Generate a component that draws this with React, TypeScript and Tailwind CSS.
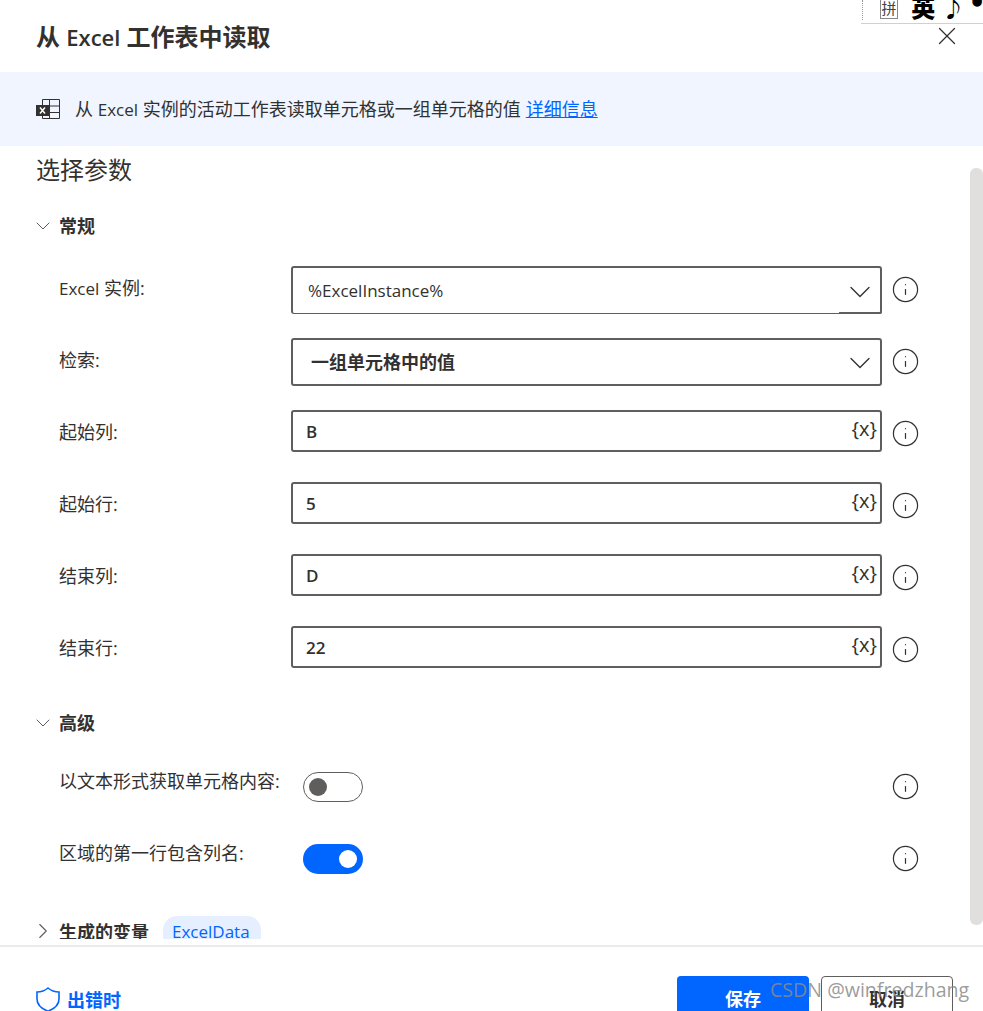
import { ChevronDown, ChevronRight, X, Info } from "lucide-react";

const font = "font-['Open_Sans','Noto_Sans_CJK_SC',sans-serif]";

const textFields = [
  { label: "起始列:", value: "B" },
  { label: "起始行:", value: "5" },
  { label: "结束列:", value: "D" },
  { label: "结束行:", value: "22" },
];

const InfoIcon = () => (
  <Info size={29} strokeWidth={1} className="text-[#323130] shrink-0" />
);

const Row = ({ label, children }: { label: React.ReactNode; children: React.ReactNode }) => (
  <div className="flex items-start h-[48px] mb-[24px]">
    <div className="w-[232px] pl-[59px] mt-[10px] box-content shrink-0 text-[18px] leading-[24px] text-[#323130]">{label}</div>
    <div className="w-[591px] shrink-0">{children}</div>
    <div className="ml-[9px] mt-[9px]">
      <InfoIcon />
    </div>
  </div>
);

const Toggle = ({ on }: { on: boolean }) =>
  on ? (
    <div className="w-[60px] h-[30px] rounded-full bg-[#0066ff] flex items-center justify-end pr-[6px]">
      <div className="w-[18px] h-[18px] rounded-full bg-white" />
    </div>
  ) : (
    <div className="w-[60px] h-[30px] rounded-full border-[1.5px] border-[#605e5c] flex items-center pl-[5px]">
      <div className="w-[18px] h-[18px] rounded-full bg-[#605e5c]" />
    </div>
  );

const ToggleRow = ({ label, on }: { label: string; on: boolean }) => (
  <div className="flex items-center h-[30px] mb-[42px]">
    <div className="w-[244px] pl-[59px] -mt-[12px] box-content shrink-0 text-[18px] leading-[24px] text-[#323130] whitespace-nowrap">
      {label}
    </div>
    <Toggle on={on} />
    <div className="ml-[528px] -mt-[2px]">
      <InfoIcon />
    </div>
  </div>
);

const SectionHeader = ({ label }: { label: string }) => (
  <div className="flex items-center pl-[31px] h-[24px]">
    <ChevronDown size={24} strokeWidth={1} className="text-[#605e5c] shrink-0" />
    <span className="ml-[4px] text-[18px] leading-[24px] font-semibold text-[#323130]">{label}</span>
  </div>
);

const App = () => {
  return (
    <div className={`relative w-[983px] h-[1011px] overflow-hidden bg-white flex flex-col ${font}`}>
      {/* Header */}
      <div className="h-[72px] shrink-0 pl-[36px] pt-[20px] text-[24px] leading-[34px] font-semibold text-[#323130]">
        从 <span className="text-[22px]">Excel</span> 工作表中读取
      </div>

      {/* Description banner */}
      <div className="h-[74px] shrink-0 bg-[#f0f5ff] flex items-center pl-[36px] text-[18px] text-[#323130]">
        <svg width="25" height="22" viewBox="0 0 25 22" className="shrink-0">
          <path d="M6.5 1.5h17v19h-17z M6.5 8h17 M6.5 14.5h17 M13.5 1.5v19" fill="none" stroke="#323130" strokeWidth="1" />
          <rect x="0" y="7" width="13" height="11" fill="#323130" />
          <path d="M4 9.5l5 6 M9 9.5l-5 6" stroke="#fff" strokeWidth="1.5" />
        </svg>
        <span className="ml-[14px]">
          从 <span className="text-[17px]">Excel</span> 实例的活动工作表读取单元格或一组单元格的值
        </span>
        <span className="ml-[5px] text-[#0066ff] underline">详细信息</span>
      </div>

      {/* Form */}
      <div className="h-[793px] shrink-0 overflow-hidden">
        <div className="pl-[36px] pt-[7px] h-[68px] text-[24px] leading-[34px] text-[#323130]">选择参数</div>
        <SectionHeader label="常规" />
        <div className="h-[28px]" />

        <Row
          label={
            <>
              <span className="text-[17px]">Excel</span> 实例:
            </>
          }
        >
          <div className="relative h-[48px] rounded-[3px] border-2 border-b border-[#605e5c] flex items-center justify-between pl-[15px] pr-[2px] text-[17px] text-[#323130]">
            <span>%ExcelInstance%</span>
            <ChevronDown size={36} strokeWidth={0.9} className="text-[#323130] mt-[2px]" />
            <div className="absolute right-[-2px] bottom-[-1px] w-[43px] h-[2px] bg-[#605e5c] rounded-br-[3px]" />
          </div>
        </Row>
        <Row label="检索:">
          <div className="h-[48px] rounded-[3px] border-2 border-[#605e5c] flex items-center justify-between pl-[18px] pr-[2px] text-[18px] font-semibold text-[#323130]">
            <span>一组单元格中的值</span>
            <ChevronDown size={36} strokeWidth={0.9} className="text-[#323130] mt-[2px]" />
          </div>
        </Row>
        {textFields.map((field) => (
          <Row key={field.label} label={field.label}>
            <div className="h-[42px] rounded-[3px] border-2 border-[#605e5c] flex items-center justify-between pl-[13px] pr-[3px] text-[17px] font-semibold text-[#323130]">
              <span className="mt-[1px]">{field.value}</span>
              <span className="text-[20px] leading-[24px] font-normal -mt-[4px]">{"{x}"}</span>
            </div>
          </Row>
        ))}

        <div className="h-[13px]" />
        <SectionHeader label="高级" />
        <div className="h-[37px]" />
        <ToggleRow label="以文本形式获取单元格内容:" on={false} />
        <ToggleRow label="区域的第一行包含列名:" on={true} />

        <div className="flex items-start pl-[30px] pt-[2px] h-[42px]">
          <ChevronRight size={26} strokeWidth={1} className="text-[#605e5c] shrink-0" />
          <span className="ml-[3px] text-[18px] leading-[28px] font-semibold text-[#323130]">生成的变量</span>
          <span className="ml-[14px] pl-[9px] pr-[11px] h-[40px] -mt-[2px] rounded-[14px] bg-[#e6efff] text-[17px] leading-[32px] text-[#0066ff]">
            ExcelData
          </span>
        </div>
      </div>

      <div className="h-[6px] shrink-0" />

      {/* Footer */}
      <div className="flex-1 border-t-2 border-[#edebe9] flex items-start justify-between pl-[36px] pr-[30px] pt-[29px]">
        <div className="flex items-center mt-[11px] text-[#0066ff] text-[18px] leading-[24px] font-semibold">
          <svg width="24" height="25" viewBox="0 0 24 25" fill="none" stroke="currentColor" strokeWidth="1.6" className="shrink-0">
            <path d="M12 1C15 3.6 18.6 5 23 5V12C23 18 18.6 21.6 12 24.2C5.4 21.6 1 18 1 12V5C5.4 5 9 3.6 12 1Z" />
          </svg>
          <span className="ml-[7px]">出错时</span>
        </div>
        <div className="flex gap-[12px]">
          <div className="w-[132px] h-[60px] rounded-[4px] bg-[#0066ff] text-white text-[18px] leading-[24px] font-semibold text-center pt-[11px]">
            保存
          </div>
          <div className="w-[132px] h-[60px] rounded-[4px] border border-[#605e5c] text-[#323130] text-[18px] leading-[24px] font-semibold text-center pt-[10px]">
            取消
          </div>
        </div>
      </div>

      {/* Scrollbar */}
      <div className="absolute left-[970px] top-[168px] w-[13px] h-[757px] rounded-[6px] bg-[#e1dfdd]" />

      {/* Close button */}
      <X size={30} strokeWidth={1} className="absolute left-[932px] top-[21px] text-[#323130]" />

      {/* IME toolbar fragment */}
      <div className="absolute left-[861px] top-0 w-[122px] h-[24px] border-b border-[#d0d0d0] flex items-start overflow-hidden text-black">
        <div className="ml-[1px] h-[20px] border-l border-dotted border-[#999]" />
        <div className="ml-[17px] -mt-[1px] w-[24px] h-[20px] border border-[#888] text-[15px] leading-[17px] text-center text-[#444]">拼</div>
        <div className="ml-[13px] -mt-[6px] text-[24px] leading-[28px] font-black">英</div>
        <div className="ml-[6px] -mt-[6px] text-[24px] leading-[28px] font-black">♪</div>
        <div className="ml-[6px] -mt-[12px] text-[30px] leading-[28px] font-black">•</div>
      </div>

      {/* Watermark */}
      <div className="absolute left-[770px] top-[977px] text-[19.6px] leading-[26px] text-[#8a8a8a]/85 font-['Open_Sans',sans-serif] whitespace-nowrap">
        CSDN @winfredzhang
      </div>
    </div>
  );
};

export default App;
